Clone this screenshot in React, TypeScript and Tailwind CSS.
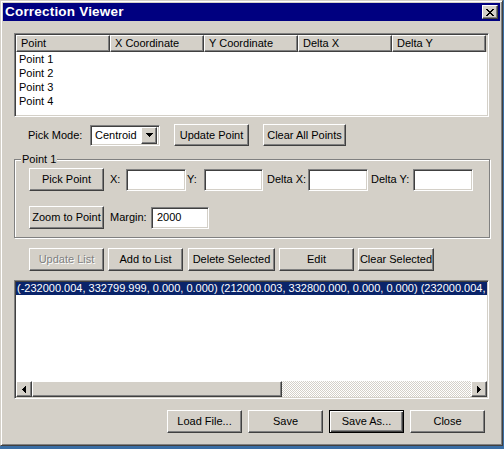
import React from 'react';

// classic 3D bevels
const raised =
  'bg-[#d4d0c8] border border-t-white border-l-white border-r-[#404040] border-b-[#404040] shadow-[inset_-1px_-1px_0_#808080]';
const sunken =
  'bg-white border border-t-[#808080] border-l-[#808080] border-r-white border-b-white shadow-[inset_1px_1px_0_#404040,inset_-1px_-1px_0_#d4d0c8]';

function Btn({
  children,
  className = '',
  disabled = false,
  isDefault = false,
}: {
  children: React.ReactNode;
  className?: string;
  disabled?: boolean;
  isDefault?: boolean;
}) {
  const bevel = isDefault
    ? 'bg-[#d4d0c8] border border-black shadow-[inset_1px_1px_0_#fff,inset_-1px_-1px_0_#404040,inset_-2px_-2px_0_#808080]'
    : raised;
  return (
    <div
      className={`${bevel} flex items-center justify-center shrink-0 leading-none ${
        disabled ? 'text-[#808080] [text-shadow:1px_1px_0_#fff]' : 'text-black'
      } ${className}`}
    >
      {children}
    </div>
  );
}

function Field({ className = '', value = '' }: { className?: string; value?: string }) {
  return (
    <div className={`${sunken} h-[22px] shrink-0 flex items-center pl-[5px] ${className}`}>
      {value}
    </div>
  );
}

function CloseGlyph() {
  const px = [
    [0, 0], [1, 0], [6, 0], [7, 0],
    [1, 1], [2, 1], [5, 1], [6, 1],
    [2, 2], [3, 2], [4, 2], [5, 2],
    [3, 3], [4, 3],
    [2, 4], [3, 4], [4, 4], [5, 4],
    [1, 5], [2, 5], [5, 5], [6, 5],
    [0, 6], [1, 6], [6, 6], [7, 6],
  ];
  return (
    <svg width="8" height="7" viewBox="0 0 8 7" shapeRendering="crispEdges">
      {px.map(([x, y]) => (
        <rect key={`${x}-${y}`} x={x} y={y} width="1" height="1" fill="#000" />
      ))}
    </svg>
  );
}

function DownArrow() {
  return (
    <svg width="7" height="4" viewBox="0 0 7 4" shapeRendering="crispEdges">
      <rect x="0" y="0" width="7" height="1" fill="#000" />
      <rect x="1" y="1" width="5" height="1" fill="#000" />
      <rect x="2" y="2" width="3" height="1" fill="#000" />
      <rect x="3" y="3" width="1" height="1" fill="#000" />
    </svg>
  );
}

function SideArrow({ dir }: { dir: 'left' | 'right' }) {
  return (
    <svg
      width="4"
      height="7"
      viewBox="0 0 4 7"
      shapeRendering="crispEdges"
      className={dir === 'right' ? 'rotate-180' : ''}
    >
      <rect x="3" y="0" width="1" height="7" fill="#000" />
      <rect x="2" y="1" width="1" height="5" fill="#000" />
      <rect x="1" y="2" width="1" height="3" fill="#000" />
      <rect x="0" y="3" width="1" height="1" fill="#000" />
    </svg>
  );
}

const columns = ['Point', 'X Coordinate', 'Y Coordinate', 'Delta X', 'Delta Y'];
const points = ['Point 1', 'Point 2', 'Point 3', 'Point 4'];

export default function App() {
  return (
    <div className="w-[504px] h-[449px] bg-[#3a6ea5] font-['Liberation_Sans',Arial,sans-serif] text-[11px] text-black overflow-hidden">
      {/* window */}
      <div className="w-[503px] h-[446px] bg-[#d4d0c8] border border-t-[#d4d0c8] border-l-[#d4d0c8] border-r-[#404040] border-b-[#404040] shadow-[inset_1px_1px_0_#fff,inset_-1px_-1px_0_#808080] p-[2px] flex flex-col">
        {/* title bar */}
        <div className="h-[18px] bg-[#000080] flex items-center justify-between pl-[2px] pr-[2px]">
          <span className="text-white font-bold text-[13.5px] leading-none tracking-[0.2px]">Correction Viewer</span>
          <div className={`${raised} w-[16px] h-[14px] flex items-center justify-center`}>
            <CloseGlyph />
          </div>
        </div>

        {/* point list view */}
        <div className={`${sunken} mt-[12px] ml-[11px] w-[475px] h-[84px] p-[1px] flex flex-col`}>
          <div className="flex h-[17px] bg-[#d4d0c8] shrink-0">
            {columns.map((c) => (
              <div key={c} className={`${raised} w-[94px] h-[17px] flex items-center pl-[4px] leading-none`}>
                {c}
              </div>
            ))}
          </div>
          <div className="flex-1 bg-white">
            {points.map((p) => (
              <div key={p} className="h-[14px] leading-[14px] pl-[3px]">
                {p}
              </div>
            ))}
          </div>
        </div>

        {/* pick mode row */}
        <div className="mt-[7px] flex items-center h-[22px]">
          <span className="ml-[25px] w-[62px] shrink-0">Pick Mode:</span>
          <div className={`${sunken} w-[70px] h-[21px] flex items-center justify-between pl-[4px] pr-[2px]`}>
            <span>Centroid</span>
            <div className={`${raised} w-[16px] h-[17px] flex items-center justify-center`}>
              <DownArrow />
            </div>
          </div>
          <Btn className="ml-[14px] w-[75px] h-[22px]">Update Point</Btn>
          <Btn className="ml-[14px] w-[83px] h-[22px]">Clear All Points</Btn>
        </div>

        {/* point group */}
        <div className="relative mt-[13px] ml-[11px] w-[476px] h-[79px] border border-[#808080] shadow-[inset_1px_1px_0_#fff,1px_1px_0_#fff] pl-[14px] pt-[8px]">
          <span className="absolute -top-[7px] left-[6px] px-[1px] bg-[#d4d0c8] leading-[13px]">Point 1</span>
          <div className="flex items-center h-[23px]">
            <Btn className="w-[75px] h-[23px]">Pick Point</Btn>
            <span className="ml-[6px] w-[16px] shrink-0">X:</span>
            <Field className="w-[60px]" />
            <span className="ml-[1px] w-[17px] shrink-0">Y:</span>
            <Field className="w-[59px]" />
            <span className="ml-[4px] w-[41px] shrink-0">Delta X:</span>
            <Field className="w-[60px]" />
            <span className="ml-[3px] w-[42px] shrink-0">Delta Y:</span>
            <Field className="w-[60px]" />
          </div>
          <div className="mt-[15px] flex items-center h-[23px]">
            <Btn className="w-[75px] h-[23px]">Zoom to Point</Btn>
            <span className="ml-[6px] w-[41px] shrink-0">Margin:</span>
            <Field className="w-[58px]" value="2000" />
          </div>
        </div>

        {/* list actions */}
        <div className="mt-[10px] ml-[26px] flex gap-[4px]">
          <Btn disabled className="w-[75px] h-[23px]">Update List</Btn>
          <Btn className="w-[75px] h-[23px]">Add to List</Btn>
          <Btn className="ml-[1px] w-[87px] h-[23px]">Delete Selected</Btn>
          <Btn className="w-[75px] h-[23px]">Edit</Btn>
          <Btn className="w-[76px] h-[23px]">Clear Selected</Btn>
        </div>

        {/* correction list box */}
        <div className={`${sunken} mt-[9px] ml-[11px] w-[475px] h-[119px] p-[1px] flex flex-col`}>
          <div className="flex-1 bg-white overflow-hidden">
            <div className="h-[13px] leading-[13px] bg-[#0a246a] text-white pl-[1px] whitespace-nowrap overflow-hidden">
              (-232000.004, 332799.999, 0.000, 0.000) (212000.003, 332800.000, 0.000, 0.000) (232000.004, 332800.001, 0.000, 0.000)
            </div>
          </div>
          <div className="h-[16px] flex shrink-0">
            <div className={`${raised} w-[16px] h-[16px] flex items-center justify-center`}>
              <SideArrow dir="left" />
            </div>
            <div className="flex-1 flex bg-[repeating-conic-gradient(#d4d0c8_0_25%,#fff_0_50%)] bg-[length:2px_2px]">
              <div className={`${raised} w-[250px] h-[16px]`} />
            </div>
            <div className={`${raised} w-[16px] h-[16px] flex items-center justify-center`}>
              <SideArrow dir="right" />
            </div>
          </div>
        </div>

        {/* dialog buttons */}
        <div className="mt-[11px] ml-[164px] flex gap-[6px]">
          <Btn className="w-[75px] h-[23px]">Load File...</Btn>
          <Btn className="w-[75px] h-[23px]">Save</Btn>
          <Btn isDefault className="w-[75px] h-[23px]">Save As...</Btn>
          <Btn className="w-[75px] h-[23px]">Close</Btn>
        </div>
      </div>
    </div>
  );
}
